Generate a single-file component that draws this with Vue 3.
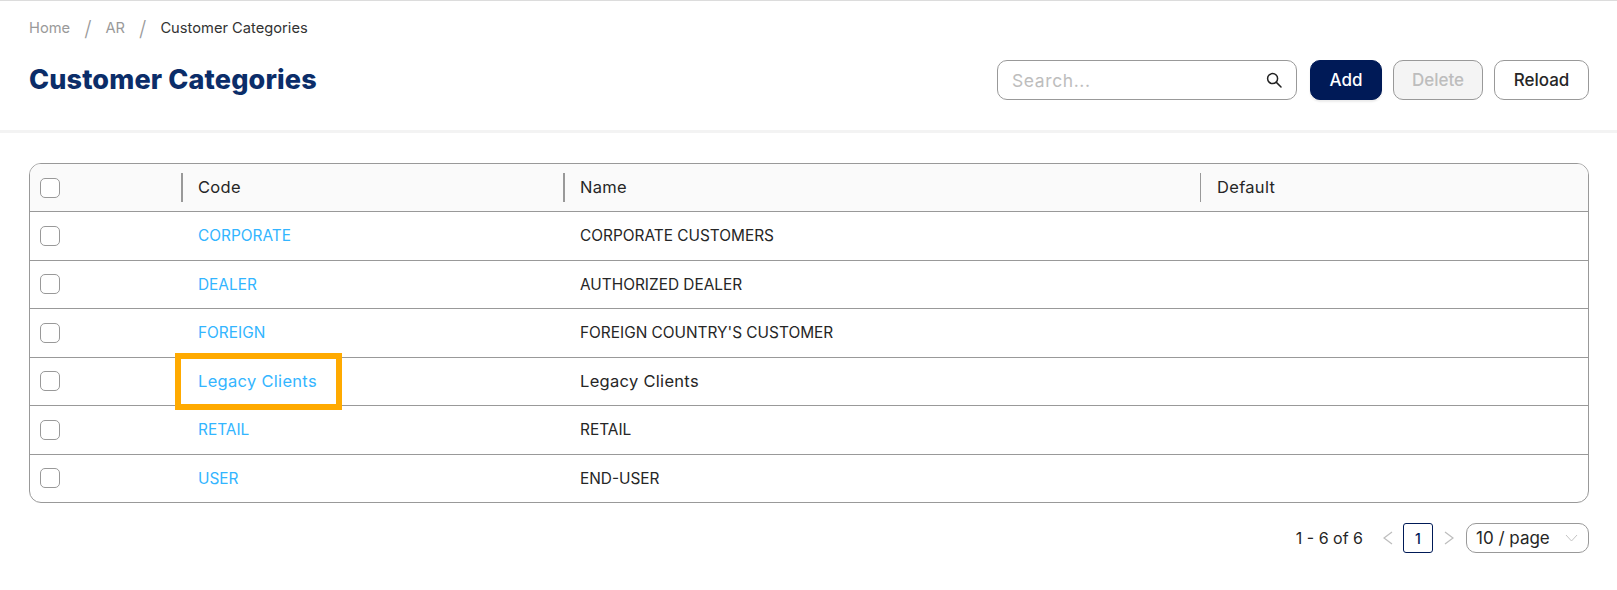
<script setup>
const rows = [
  { code: 'CORPORATE', name: 'CORPORATE CUSTOMERS' },
  { code: 'DEALER', name: 'AUTHORIZED DEALER' },
  { code: 'FOREIGN', name: "FOREIGN COUNTRY'S CUSTOMER" },
  { code: 'Legacy Clients', name: 'Legacy Clients', marked: true },
  { code: 'RETAIL', name: 'RETAIL' },
  { code: 'USER', name: 'END-USER' }
]
</script>

<template>
  <div class="page">
    <header class="top">
      <nav class="crumbs">
        <span class="crumb">Home</span>
        <span class="slash">/</span>
        <span class="crumb">AR</span>
        <span class="slash">/</span>
        <span class="crumb current">Customer Categories</span>
      </nav>
      <div class="headline">
        <h1>Customer Categories</h1>
        <div class="actions">
          <label class="search">
            <input type="text" placeholder="Search..." />
            <svg width="16" height="16" viewBox="0 0 16 16" fill="none" stroke="#222" stroke-width="1.5" stroke-linecap="round">
              <circle cx="6.6" cy="6.6" r="5" />
              <path d="M10.4 10.4 15 15" />
            </svg>
          </label>
          <button class="btn primary">Add</button>
          <button class="btn disabled">Delete</button>
          <button class="btn reload">Reload</button>
        </div>
      </div>
    </header>

    <main class="content">
      <div class="table">
        <div class="row head">
          <div class="cell check"><span class="box"></span></div>
          <div class="cell"><i class="sep thick"></i>Code</div>
          <div class="cell"><i class="sep thick"></i>Name</div>
          <div class="cell"><i class="sep"></i>Default</div>
        </div>
        <div v-for="r in rows" :key="r.code" class="row" :class="{ mixed: r.marked }">
          <div class="cell check"><span class="box"></span></div>
          <div class="cell link">
            {{ r.code }}
            <span v-if="r.marked" class="mark"></span>
          </div>
          <div class="cell">{{ r.name }}</div>
          <div class="cell"></div>
        </div>
      </div>

      <div class="pager">
        <span class="total">1 - 6 of 6</span>
        <svg class="chev prev" width="10" height="14" viewBox="0 0 10 14" fill="none" stroke="#bdbdbd" stroke-width="1.2">
          <path d="M9 1 1 7l8 6" />
        </svg>
        <span class="page-no">1</span>
        <svg class="chev next" width="10" height="14" viewBox="0 0 10 14" fill="none" stroke="#bdbdbd" stroke-width="1.2">
          <path d="m1 1 8 6-8 6" />
        </svg>
        <div class="size">
          <span>10 / page</span>
          <svg width="13" height="8" viewBox="0 0 13 8" fill="none" stroke="#c4c4c4" stroke-width="1">
            <path d="m1 1 5.500 6L12 1" />
          </svg>
        </div>
      </div>
    </main>
  </div>
</template>

<style>
html, body { margin: 0; background: #fff; }
</style>

<style scoped>
.page {
  font-family: Inter, "Open Sans", "Liberation Sans", sans-serif;
  font-size: 15px;
  color: #262626;
  border-top: 1px solid #dcdcdc;
  min-height: 589px;
  box-sizing: border-box;
}
.top {
  height: 132px;
  border-bottom: 3px solid #f3f3f3;
  box-sizing: border-box;
  padding: 0 28px 0 29px;
}
.crumbs {
  display: flex;
  align-items: center;
  height: 54px;
  font-size: 14.7px;
}
.crumb { color: #9a9a9a; }
.crumb.current { color: #333; }
.slash { color: #9a9a9a; font-size: 21px; margin: 0 14px 0 14px; font-weight: 300; }
.headline {
  display: flex;
  justify-content: space-between;
  align-items: center;
  height: 40px;
  margin-top: 5px;
}
h1 {
  margin: 0;
  padding-bottom: 2px;
  font-size: 27px;
  font-weight: 800;
  letter-spacing: .15px;
  color: #0b2d69;
}
.actions { display: flex; align-items: center; }
.search {
  width: 300px;
  height: 40px;
  box-sizing: border-box;
  border: 1px solid #999;
  border-radius: 10px;
  display: flex;
  align-items: center;
  padding: 0 14px;
  margin-right: 13px;
}
.search input {
  flex: 1;
  min-width: 0;
  border: 0;
  outline: 0;
  padding: 0;
  font: inherit;
  font-size: 17.5px;
  letter-spacing: .6px;
  color: #333;
}
.search input::placeholder { color: #bdbdbd; }
.btn {
  height: 40px;
  box-sizing: border-box;
  border-radius: 10px;
  border: 1px solid #999;
  background: #fff;
  padding: 0;
  font: inherit;
  font-size: 17px;
  font-weight: 500;
  color: #262626;
}
.btn.primary {
  width: 72px;
  margin-right: 11px;
  background: #001a57;
  border-color: #001a57;
  color: #fff;
  box-shadow: 0 2px 2px rgba(0, 0, 0, .08);
}
.btn.disabled {
  width: 90px;
  margin-right: 11px;
  background: #f4f4f4;
  color: #bdbdbd;
}
.btn.reload { width: 95px; }
.content { padding: 30px 28px 0 29px; }
.table {
  border: 1px solid #999;
  border-radius: 12px;
  overflow: visible;
}
.row {
  display: grid;
  grid-template-columns: 151px 382px 637px 1fr;
  height: 48.5px;
  box-sizing: border-box;
  border-top: 1px solid #999;
}
.row.head {
  height: 47px;
  border-top: 0;
  background: #fafafa;
  border-radius: 11px 11px 0 0;
}
.cell {
  position: relative;
  display: flex;
  align-items: center;
  padding-left: 17px;
  font-size: 15.4px;
}
.row.head .cell { font-size: 16.5px; letter-spacing: .3px; padding-bottom: 1px; }
.row.mixed .cell { font-size: 16.5px; letter-spacing: .3px; }
.cell.check { padding-left: 10px; }
.row.head .cell.check { padding-bottom: 0; }
.cell.link { color: #33b5ff; }
.box {
  width: 20px;
  height: 20px;
  box-sizing: border-box;
  border: 1px solid #999;
  border-radius: 5px;
  background: #fff;
}
.sep {
  position: absolute;
  left: 0;
  top: 9px;
  bottom: 9px;
  width: 1px;
  background: #999;
}
.sep.thick { width: 2px; }
.mark {
  position: absolute;
  left: -6px;
  top: -5px;
  width: 167px;
  height: 57px;
  box-sizing: border-box;
  border: 6px solid #ffaa00;
  pointer-events: none;
}
.pager {
  display: flex;
  justify-content: flex-end;
  align-items: center;
  height: 30px;
  margin-top: 20px;
  font-size: 16px;
}
.total { margin-right: 20px; }
.chev { flex: none; }
.page-no {
  width: 30px;
  height: 30px;
  box-sizing: border-box;
  border: 1px solid #001a57;
  border-radius: 3px;
  margin: 0 11px 0 10px;
  display: flex;
  align-items: center;
  justify-content: center;
  color: #001a57;
  font-weight: 500;
  font-size: 14px;
}
.size {
  width: 123px;
  height: 30px;
  box-sizing: border-box;
  margin-left: 12px;
  border: 1px solid #999;
  border-radius: 10px;
  display: flex;
  align-items: center;
  justify-content: space-between;
  padding: 0 10px 0 9px;
  font-size: 17px;
}
</style>
